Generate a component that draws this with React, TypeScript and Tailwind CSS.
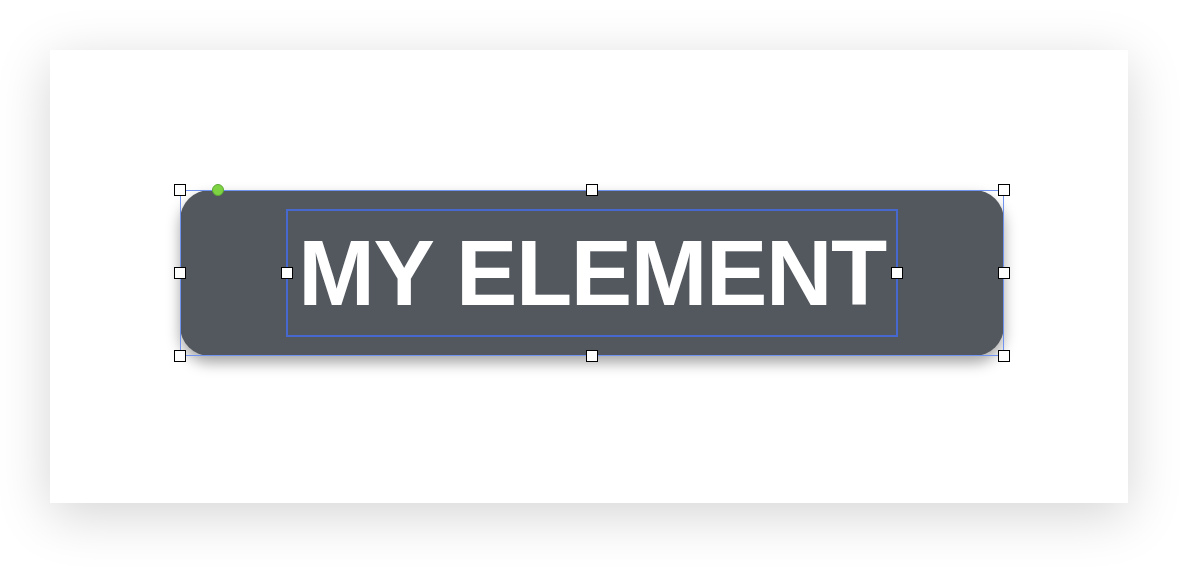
const handleCls =
  'absolute h-3 w-3 -translate-x-1/2 -translate-y-1/2 border border-black bg-white';

function Handle({ className }: { className: string }) {
  return <span className={`${handleCls} ${className}`} />;
}

export default function App() {
  return (
    <div className="h-[573px] w-[1197px] bg-white pl-[50px] pt-[50px]">
      {/* Canvas / artboard */}
      <div className="h-[453px] w-[1078px] bg-white pl-[130px] pt-[140px] shadow-[0_12px_50px_rgba(0,0,0,0.17)]">
        {/* Selected element */}
        <div className="relative h-[166px] w-[824px]">
          <div className="flex h-full w-full items-center justify-center rounded-[30px] bg-[#53585f] shadow-[0_7px_14px_rgba(0,0,0,0.35)]">
            <div className="relative flex h-[128px] w-[612px] items-center justify-center border-2 border-[#4769cf]">
              <span
                className="text-[92px] font-bold leading-none tracking-[-1.4px] text-white"
                style={{ fontFamily: '"Liberation Sans", Arial, sans-serif' }}
              >
                MY ELEMENT
              </span>
              <Handle className="left-[-1px] top-1/2" />
              <Handle className="left-[calc(100%+1px)] top-1/2" />
            </div>
          </div>

          {/* Selection frame */}
          <div className="pointer-events-none absolute inset-0 border border-[#6f93ee]" />
          <Handle className="left-0 top-0" />
          <Handle className="left-1/2 top-0" />
          <Handle className="left-full top-0" />
          <Handle className="left-0 top-1/2" />
          <Handle className="left-full top-1/2" />
          <Handle className="left-0 top-full" />
          <Handle className="left-1/2 top-full" />
          <Handle className="left-full top-full" />

          {/* Rotation knob */}
          <span className="absolute left-[38px] top-0 h-3 w-3 -translate-x-1/2 -translate-y-1/2 rounded-full border border-[#5da834] bg-[#7dd342]" />
        </div>
      </div>
    </div>
  );
}
